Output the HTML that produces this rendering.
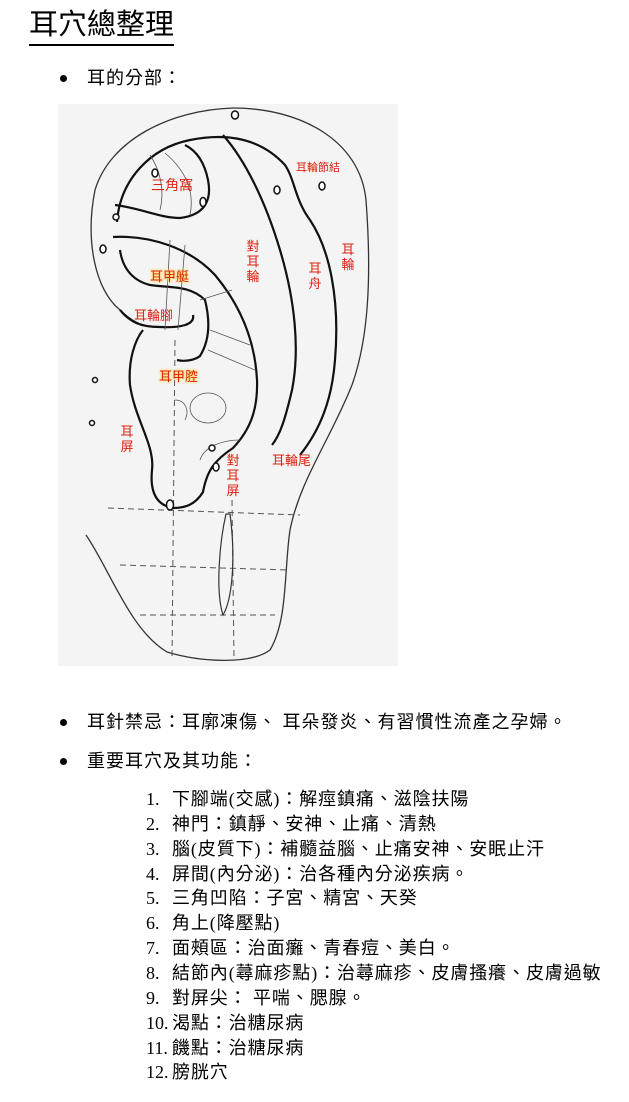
<!DOCTYPE html>
<html><head><meta charset="utf-8">
<style>
body{margin:0;width:629px;height:1102px;background:#fff;position:relative;overflow:hidden;font-family:"Liberation Serif","Noto Sans CJK TC",sans-serif;color:#000}
.a{position:absolute;white-space:nowrap}
.t{left:29px;top:7px;font-size:29px;font-family:"Liberation Sans","Noto Sans CJK TC",sans-serif;border-bottom:2px solid #000;line-height:37px}
.b{font-size:18px;line-height:20px;letter-spacing:1px}
.dot{position:absolute;width:7px;height:7px;border-radius:50%;background:#000}
.li{left:146px;font-size:18px;line-height:20px;letter-spacing:0.9px}
.li span{display:inline-block;width:26px;letter-spacing:0}
.r{position:absolute;color:#d21;font-size:13px;line-height:15px;font-family:"Noto Sans CJK TC",sans-serif}
.v{width:14px;white-space:normal;text-align:center}
.y{text-shadow:0 0 3px #fc3,0 0 2px #fd6}
</style></head><body>
<div class="a t">耳穴總整理</div>
<div class="dot" style="left:60px;top:75px"></div>
<div class="a b" style="left:87px;top:68px">耳的分部：</div>

<svg class="a" style="left:58px;top:104px" width="340" height="562" viewBox="58 104 340 562">
<rect x="58" y="104" width="340" height="562" fill="#f4f4f4"/>
<g fill="none" stroke="#333" stroke-width="1.3">
<path d="M233,108 C300,108 360,140 366,200 C372,280 368,340 352,385 C330,440 300,480 290,530 C284,570 288,620 270,650 C250,665 200,662 167,652 C130,630 110,570 86,535"/>
<path d="M233,108 C170,110 110,140 95,190 C85,240 95,290 120,310 C130,320 140,325 150,327"/>
</g>
<g fill="none" stroke="#111" stroke-width="2.2">
<path d="M117,222 C120,180 150,148 190,140 C230,132 262,140 285,165 C295,180 295,200 310,220 C330,250 340,300 335,360 C332,400 320,430 300,455"/>
<path d="M223,135 C245,160 265,200 280,250 C295,300 300,350 292,390 C285,420 280,435 272,445"/>
<path d="M113,237 C150,235 190,248 215,275 C240,305 255,340 257,380 C258,410 250,430 233,448 C215,460 207,470 203,492 C195,505 185,508 173,508 C155,505 150,490 152,470 C155,445 135,420 130,385 C128,360 135,340 143,330"/>
<path d="M115,205 C140,208 160,218 180,218 C205,215 212,200 208,180 C204,160 195,150 185,145"/>
<path d="M120,250 C122,265 130,280 150,285 C170,288 190,285 205,300 C210,320 210,340 200,356 C195,360 185,362 177,360"/>
<path d="M120,310 C130,322 140,327 160,327 C180,328 195,325 193,315"/>
</g>
<g fill="none" stroke="#555" stroke-width="0.8">
<path d="M150,155 C160,170 165,190 160,210"/><path d="M165,153 C185,170 195,190 190,215"/>
<path d="M170,240 L165,330"/><path d="M185,245 L178,330"/>
<path d="M200,300 L232,290"/><path d="M210,330 L250,345"/><path d="M208,350 L255,370"/>
<path d="M175,400 C185,400 190,410 185,420"/>
<ellipse cx="208" cy="408" rx="18" ry="15"/>
<path d="M200,460 C205,445 225,440 240,440"/>
</g>
<g fill="none" stroke="#555" stroke-width="1" stroke-dasharray="6,4">
<path d="M175,340 L172,660"/><path d="M232,500 L234,660"/>
<path d="M108,508 L300,515"/><path d="M120,565 L290,570"/><path d="M140,615 L275,615"/>
</g>
<path d="M226,514 C220,540 215,590 223,615 C232,600 236,560 230,514 Z" fill="none" stroke="#333" stroke-width="1.2"/>
<g fill="#fff" stroke="#111" stroke-width="1.5">
<ellipse cx="235" cy="115" rx="3.5" ry="4"/><ellipse cx="155" cy="173" rx="3" ry="4"/>
<ellipse cx="203" cy="202" rx="3" ry="4.5"/><ellipse cx="116" cy="217" rx="3" ry="3"/>
<ellipse cx="103" cy="249" rx="3" ry="4"/><ellipse cx="277" cy="190" rx="3" ry="4"/>
<ellipse cx="322" cy="186" rx="3" ry="4"/><ellipse cx="95" cy="380" rx="2.5" ry="2.5"/>
<ellipse cx="92" cy="423" rx="2.5" ry="2.5"/><ellipse cx="212" cy="448" rx="3" ry="3"/>
<ellipse cx="216" cy="467" rx="3" ry="4"/><ellipse cx="170" cy="505" rx="3.5" ry="5"/>
</g>
</svg>
<div class="r" style="left:151px;top:178px;font-size:14px">三角窩</div>
<div class="r" style="left:296px;top:160px;font-size:11px">耳輪節結</div>
<div class="r v" style="left:246px;top:238px">對耳輪</div>
<div class="r v" style="left:308px;top:260px">耳舟</div>
<div class="r v" style="left:341px;top:241px">耳輪</div>
<div class="r y" style="left:150px;top:268px">耳甲艇</div>
<div class="r" style="left:134px;top:307px">耳輪腳</div>
<div class="r y" style="left:159px;top:368px">耳甲腔</div>
<div class="r v" style="left:120px;top:423px">耳屏</div>
<div class="r v" style="left:226px;top:452px">對耳屏</div>
<div class="r" style="left:272px;top:452px">耳輪尾</div>

<div class="dot" style="left:60px;top:719px"></div>
<div class="a b" style="left:87px;top:712px">耳針禁忌：耳廓凍傷、 耳朵發炎、有習慣性流產之孕婦。</div>
<div class="dot" style="left:60px;top:758px"></div>
<div class="a b" style="left:87px;top:751px">重要耳穴及其功能：</div>

<div class="a li" style="top:789px"><span>1.</span>下腳端(交感)：解痙鎮痛、滋陰扶陽</div>
<div class="a li" style="top:814px"><span>2.</span>神門：鎮靜、安神、止痛、清熱</div>
<div class="a li" style="top:839px"><span>3.</span>腦(皮質下)：補髓益腦、止痛安神、安眠止汗</div>
<div class="a li" style="top:864px"><span>4.</span>屏間(內分泌)：治各種內分泌疾病。</div>
<div class="a li" style="top:888px"><span>5.</span>三角凹陷：子宮、精宮、天癸</div>
<div class="a li" style="top:913px"><span>6.</span>角上(降壓點)</div>
<div class="a li" style="top:938px"><span>7.</span>面頰區：治面癱、青春痘、美白。</div>
<div class="a li" style="top:963px"><span>8.</span>結節內(蕁麻疹點)：治蕁麻疹、皮膚搔癢、皮膚過敏</div>
<div class="a li" style="top:988px"><span>9.</span>對屏尖： 平喘、腮腺。</div>
<div class="a li" style="top:1013px"><span>10.</span>渴點：治糖尿病</div>
<div class="a li" style="top:1038px"><span>11.</span>饑點：治糖尿病</div>
<div class="a li" style="top:1062px"><span>12.</span>膀胱穴</div>
</body></html>
